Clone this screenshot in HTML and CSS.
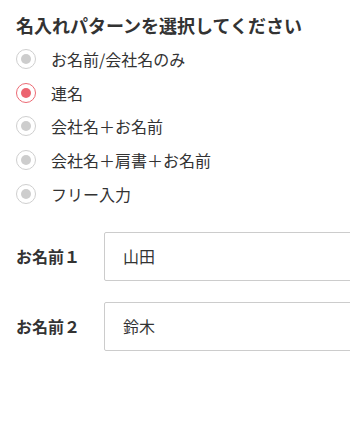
FILE: index.html
```html
<!DOCTYPE html>
<html lang="ja">
<head>
<meta charset="utf-8">
<link rel="stylesheet" href="styles.css">
</head>
<body>
<div class="page">
  <h2 class="title">名入れパターンを選択してください</h2>
  <div class="options">
    <label class="option"><span class="radio"></span><span class="opt-text">お名前/会社名のみ</span></label>
    <label class="option selected"><span class="radio"></span><span class="opt-text">連名</span></label>
    <label class="option"><span class="radio"></span><span class="opt-text">会社名＋お名前</span></label>
    <label class="option"><span class="radio"></span><span class="opt-text">会社名＋肩書＋お名前</span></label>
    <label class="option"><span class="radio"></span><span class="opt-text">フリー入力</span></label>
  </div>
  <div class="fields">
    <div class="field">
      <span class="field-label">お名前１</span>
      <div class="field-box">山田</div>
    </div>
    <div class="field">
      <span class="field-label">お名前２</span>
      <div class="field-box">鈴木</div>
    </div>
  </div>
</div>
</body>
</html>
```

FILE: styles.css
```css
html, body {
  margin: 0;
  padding: 0;
  background: #fff;
}
body {
  font-family: "Noto Sans CJK JP", "Noto Sans", sans-serif;
  color: #333;
  overflow: hidden;
}
.page {
  padding: 12px 0 0 16px;
  overflow: hidden;
}
.title {
  margin: 0;
  font-size: 18px;
  line-height: 27px;
  font-weight: 700;
  color: #333;
}
.options {
  margin-top: 3px;
  display: flex;
  flex-direction: column;
}
.option {
  display: flex;
  align-items: center;
  height: 33.75px;
  font-size: 16px;
  color: #333;
}
.radio {
  box-sizing: border-box;
  width: 20px;
  height: 20px;
  border: 1px solid #cfcfcf;
  border-radius: 50%;
  display: flex;
  align-items: center;
  justify-content: center;
  margin-right: 15px;
  flex: none;
}
.radio::after {
  content: "";
  width: 10px;
  height: 10px;
  border-radius: 50%;
  background: #cdcdcd;
}
.option.selected .radio {
  border-color: #ec6a74;
}
.option.selected .radio::after {
  background: #ec6470;
}
.fields {
  margin-top: 21px;
  display: flex;
  flex-direction: column;
  gap: 21px;
}
.field {
  display: flex;
  align-items: center;
}
.field-label {
  width: 88px;
  flex: none;
  font-size: 16px;
  font-weight: 700;
  color: #333;
}
.field-box {
  box-sizing: border-box;
  flex: none;
  width: 300px;
  height: 49px;
  border: 1px solid #cccccc;
  border-radius: 2px;
  padding-left: 18px;
  display: flex;
  align-items: center;
  font-size: 16px;
  color: #333;
}
```
